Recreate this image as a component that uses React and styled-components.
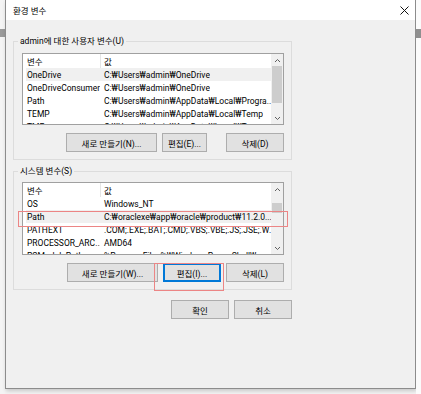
import styled, { createGlobalStyle } from "styled-components";

const GlobalStyle = createGlobalStyle`
  html, body { margin: 0; padding: 0; }
  body {
    background: #f3f3f3;
    font-family: Roboto, "Noto Sans CJK KR", sans-serif;
    color: #000;
  }
`;

const Screen = styled.div`
  width: 421px;
  height: 394px;
  display: flex;
  overflow: hidden;
  background: #f3f3f3;
`;

const Backdrop = styled.div`
  width: ${(p) => p.w}px;
  flex-shrink: 0;
  display: flex;
  flex-direction: column;
  background: ${(p) => p.bg};
`;

const BackBlock = styled.div`
  height: ${(p) => p.h}px;
  margin-top: ${(p) => p.top}px;
  background: ${(p) => p.color};
`;

const Dialog = styled.div`
  width: 411px;
  height: 389px;
  flex-shrink: 0;
  box-sizing: border-box;
  border: 1px solid #8c8c8c;
  border-top: none;
  display: flex;
  flex-direction: column;
  background: #f0f0f0;
  box-shadow: 1px 2px 4px rgba(0, 0, 0, 0.18);
`;

const TitleBar = styled.div`
  height: 20px;
  flex-shrink: 0;
  background: #fff;
  display: flex;
  align-items: center;
  justify-content: space-between;
  padding: 0 6px 0 7px;
  font-size: 8.5px;
`;

const CloseIcon = () => (
  <svg width="9" height="9" viewBox="0 0 9 9">
    <path d="M0.5 0.5 L8.5 8.5 M8.5 0.5 L0.5 8.5" stroke="#111" strokeWidth="1" />
  </svg>
);

const Body = styled.div`
  flex: 1;
  padding: 15px 0 0 7px;
  display: flex;
  flex-direction: column;
  font-size: 8.5px;
`;

const Column = styled.div`
  width: 279px;
  display: flex;
  flex-direction: column;
`;

const Group = styled.fieldset`
  box-sizing: border-box;
  width: 279px;
  margin: ${(p) => p.mt || 0}px 0 0 0;
  padding: 0 7px 7px 8px;
  border: 1px solid #dcdcdc;
  min-width: 0;
`;

const Legend = styled.legend`
  font-size: 8.5px;
  line-height: 12px;
  padding: 0 2px;
  margin-left: -4px;
`;

const ListWrap = styled.div`
  position: relative;
  margin-top: ${(p) => p.mt}px;
`;

const ListBox = styled.div`
  box-sizing: border-box;
  height: ${(p) => p.h}px;
  border: 1px solid #a0a0a0;
  background: #fff;
  display: flex;
  overflow: hidden;
`;

const Table = styled.div`
  flex: 1;
  padding-left: 3px;
  overflow: hidden;
`;

const Row = styled.div`
  height: ${(p) => (p.header ? 14 : 13)}px;
  display: flex;
  align-items: center;
  background: ${(p) => (p.selected ? "#f0f0f0" : "transparent")};
  white-space: nowrap;
`;

const NameCell = styled.div`
  width: 75px;
  flex-shrink: 0;
  height: 100%;
  display: flex;
  align-items: center;
  padding-left: 1px;
  box-sizing: border-box;
  border-right: ${(p) => (p.header ? "1px solid #e5e5e5" : "1px solid transparent")};
  overflow: hidden;
`;

const ValueCell = styled.div`
  padding-left: 3px;
  overflow: hidden;
`;

const ScrollBar = styled.div`
  width: 12px;
  flex-shrink: 0;
  display: flex;
  flex-direction: column;
  background: #f0f0f0;
`;

const Arrow = styled.div`
  height: 12px;
  display: flex;
  align-items: center;
  justify-content: center;
`;

const Track = styled.div`
  flex: 1;
  display: flex;
  flex-direction: column;
  padding: 0 1px;
`;

const Thumb = styled.div`
  margin-top: ${(p) => p.top}px;
  height: ${(p) => p.h}px;
  background: #cdcdcd;
`;

const Chevron = ({ down }) => (
  <svg width="7" height="5" viewBox="0 0 7 5">
    <path
      d={down ? "M1 1 L3.5 3.5 L6 1" : "M1 4 L3.5 1.5 L6 4"}
      fill="none"
      stroke="#606060"
      strokeWidth="1"
    />
  </svg>
);

const ButtonRow = styled.div`
  display: flex;
  justify-content: flex-end;
  gap: 5px;
  margin-top: ${(p) => p.mt}px;
`;

const Button = styled.button`
  position: relative;
  box-sizing: border-box;
  width: ${(p) => p.w}px;
  height: 19px;
  margin-right: ${(p) => p.after || 0}px;
  padding: 0;
  font-family: inherit;
  font-size: 8.5px;
  color: #000;
  background: #e1e1e1;
  border: ${(p) => (p.focused ? "2px solid #0078d7" : "1px solid #adadad")};
`;

const Marker = styled.span`
  position: absolute;
  pointer-events: none;
  border: 1px solid #ec8585;
  left: ${(p) => p.l}px;
  top: ${(p) => p.t}px;
  width: ${(p) => p.w}px;
  height: ${(p) => p.h}px;
`;

const userVars = [
  ["OneDrive", "C:₩Users₩admin₩OneDrive"],
  ["OneDriveConsumer", "C:₩Users₩admin₩OneDrive"],
  ["Path", "C:₩Users₩admin₩AppData₩Local₩Progra..."],
  ["TEMP", "C:₩Users₩admin₩AppData₩Local₩Temp"],
  ["TMP", "C:₩Users₩admin₩AppData₩Local₩Temp"],
];

const systemVars = [
  ["OS", "Windows_NT"],
  ["Path", "C:₩oraclexe₩app₩oracle₩product₩11.2.0..."],
  ["PATHEXT", ".COM;.EXE;.BAT;.CMD;.VBS;.VBE;.JS;.JSE;.W..."],
  ["PROCESSOR_ARC...", "AMD64"],
  ["PSModulePath", "%ProgramFiles%₩WindowsPowerShell₩..."],
];

const VarList = ({ rows, selected, height, thumbTop, thumbH }) => (
  <ListBox h={height}>
    <Table>
      <Row header>
        <NameCell header>변수</NameCell>
        <ValueCell>값</ValueCell>
      </Row>
      {rows.map(([name, value], i) => (
        <Row key={name} selected={i === selected}>
          <NameCell>{name}</NameCell>
          <ValueCell>{value}</ValueCell>
        </Row>
      ))}
    </Table>
    <ScrollBar>
      <Arrow>
        <Chevron />
      </Arrow>
      <Track>
        <Thumb top={thumbTop} h={thumbH} />
      </Track>
      <Arrow>
        <Chevron down />
      </Arrow>
    </ScrollBar>
  </ListBox>
);

export default function App() {
  return (
    <>
      <GlobalStyle />
      <Screen>
        <Backdrop w={5} bg="#f4f4f4">
          <BackBlock top={29} h={8} color="#9a9a9a" />
        </Backdrop>
        <Dialog>
          <TitleBar>
            <span>환경 변수</span>
            <CloseIcon />
          </TitleBar>
          <Body>
            <Column>
              <Group>
                <Legend>admin에 대한 사용자 변수(U)</Legend>
                <ListWrap mt={6}>
                  <VarList rows={userVars} selected={0} height={72} thumbTop={0} thumbH={37} />
                </ListWrap>
                <ButtonRow mt={8}>
                  <Button w={91}>새로 만들기(N)...</Button>
                  <Button w={45} after={14}>편집(E)...</Button>
                  <Button w={58}>삭제(D)</Button>
                </ButtonRow>
              </Group>
              <Group mt={5}>
                <Legend>시스템 변수(S)</Legend>
                <ListWrap mt={5}>
                  <VarList rows={systemVars} selected={1} height={73} thumbTop={8} thumbH={10} />
                  <Marker l={-4} t={29} w={268} h={14} />
                </ListWrap>
                <ButtonRow mt={8}>
                  <Button w={91}>새로 만들기(W)...</Button>
                  <Button w={58} focused>
                    편집(I)...
                    <Marker l={-11} t={-2} w={68} h={26} />
                  </Button>
                  <Button w={58}>삭제(L)</Button>
                </ButtonRow>
              </Group>
              <ButtonRow mt={10}>
                <Button w={58}>확인</Button>
                <Button w={58}>취소</Button>
              </ButtonRow>
            </Column>
          </Body>
        </Dialog>
        <Backdrop w={5} bg="#fbfbfb">
          <BackBlock top={29} h={9} color="#8f8f8f" />
        </Backdrop>
      </Screen>
    </>
  );
}
